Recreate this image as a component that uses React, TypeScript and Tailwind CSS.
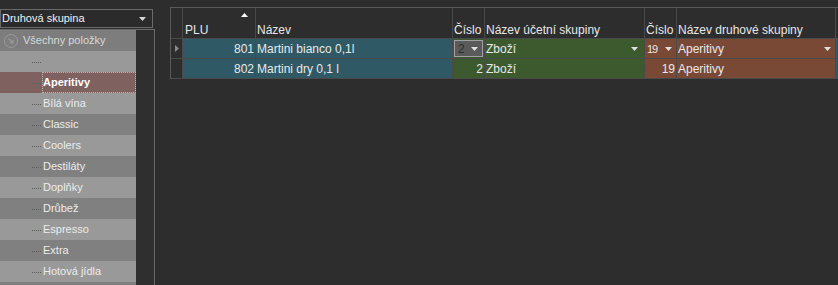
import React from "react";

const font = { fontFamily: '"Liberation Sans", Arial, sans-serif' };

const treeItems = [
  "Bílá vína",
  "Classic",
  "Coolers",
  "Destiláty",
  "Doplňky",
  "Drůbež",
  "Espresso",
  "Extra",
  "Hotová jídla",
  "",
];

const Caret: React.FC<{ className?: string }> = ({ className }) => (
  <svg width="7" height="4" viewBox="0 0 7 4" className={className}>
    <path d="M0 0h7L3.5 4z" fill="currentColor" />
  </svg>
);

const TreeRow: React.FC<{ label: string; dark: boolean }> = ({ label, dark }) => (
  <div className={`relative h-[21px] flex items-center ${dark ? "bg-[#808080]" : "bg-[#999999]"}`}>
    <div className="absolute left-[32px] top-1/2 w-[9px] border-t border-dotted border-[#5c5c5c]" />
    <span className="ml-[43px] text-[11px] text-[#ececec]">{label}</span>
  </div>
);

const cellLine = "border-r border-b border-[#4a4a4a]";
const headCell = `h-[31px] ${cellLine} flex items-end pl-[1px] leading-[16px]`;

export default function App() {
  return (
    <div className="w-[838px] h-[285px] bg-[#2d2d2d] flex overflow-hidden" style={font}>
      {/* left panel */}
      <div className="w-[155px] shrink-0 flex flex-col">
        <div className="mt-[9px] h-[19px] w-[153px] border border-[#6a6a6a] bg-[#2b2b2b] flex items-center justify-between pl-[1px] pr-[6px]">
          <span className="text-[11px] text-[#f0f0f0] leading-none">Druhová skupina</span>
          <Caret className="text-[#d8d8d8]" />
        </div>
        <div className="mt-[1px] flex-1 border-t border-r border-[#6a6a6a] flex overflow-hidden">
          <div className="w-[136px] relative">
            <div className="absolute left-[32px] top-[42px] bottom-0 border-l border-dotted border-[#5c5c5c]" />
            <div className="h-[21px] bg-[#7d7d7d] flex items-center">
              <span className="ml-[4px] w-[14px] h-[14px] rounded-full border border-[#9a9a9a] flex items-center justify-center">
                <svg width="8" height="8" viewBox="0 0 8 8">
                  <path d="M1.5 1.5L6 6M6 2.5V6H2.5" stroke="#9a9a9a" strokeWidth="1.2" fill="none" />
                </svg>
              </span>
              <span className="ml-[5px] text-[11px] text-[#d9d9d9]">Všechny položky</span>
            </div>
            <div className="relative h-[21px] bg-[#999999]">
              <div className="absolute left-[32px] top-[11px] w-[9px] border-t border-dotted border-[#5c5c5c]" />
            </div>
            <div className="relative h-[21px] bg-[#7f615f] flex items-center">
              <div className="absolute left-[32px] top-1/2 w-[9px] border-t border-dotted border-[#5c5c5c]" />
              <div className="absolute left-[42px] right-0 top-0 bottom-0 border border-dotted border-[#b8b8b8]" />
              <span className="ml-[43px] text-[11px] font-bold text-white">Aperitivy</span>
            </div>
            {treeItems.map((t, i) => (
              <TreeRow key={i} label={t} dark={i % 2 === 1} />
            ))}
          </div>
          <div className="flex-1 bg-[#2f2f2f]" />
        </div>
      </div>

      {/* splitter */}
      <div className="w-[15px] shrink-0" />

      {/* grid */}
      <div className="flex-1 mt-[7px] border-t border-l border-[#5a5a5a] self-start">
        <div className="grid grid-cols-[12px_73px_197px_32px_160px_32px_159px_1fr] text-[12px] text-[#e8e8e8]">
          {/* header */}
          <div className={`h-[31px] ${cellLine}`} />
          <div className={`${headCell} relative pl-[2px]`}>
            <span>PLU</span>
            <Caret className="absolute right-[7px] top-[5px] rotate-180 text-white" />
          </div>
          <div className={headCell}>Název</div>
          <div className={headCell}>Číslo</div>
          <div className={headCell}>Název účetní skupiny</div>
          <div className={headCell}>Číslo</div>
          <div className={headCell}>Název druhové skupiny</div>
          <div className="h-[31px] border-b border-[#4a4a4a]" />

          {/* row 1 */}
          <div className={`h-[20px] ${cellLine} flex items-center justify-center`}>
            <svg width="4" height="7" viewBox="0 0 4 7">
              <path d="M0 0v7l4-3.5z" fill="#8a8a8a" />
            </svg>
          </div>
          <div className={`h-[20px] ${cellLine} bg-[#2f5965] flex items-center justify-end pr-[1px] pt-[1px]`}>801</div>
          <div className={`h-[20px] ${cellLine} bg-[#2f5965] flex items-center pl-[1px] pt-[1px]`}>Martini bianco 0,1l</div>
          <div className={`h-[20px] ${cellLine} bg-[#3d5a2f] p-[1px]`}>
            <div className="h-full border border-[#a0a0a0] bg-[#5a5a5a] flex items-center justify-between pl-[3px] pr-[4px]">
              <span className="text-[#2c2c2c]">2</span>
              <Caret className="text-[#e0e0e0]" />
            </div>
          </div>
          <div className={`h-[20px] ${cellLine} bg-[#3d5a2f] flex items-center justify-between pl-[1px] pr-[6px] pt-[1px]`}>
            <span>Zboží</span>
            <Caret className="text-[#e0e0e0]" />
          </div>
          <div className={`h-[20px] ${cellLine} bg-[#7a4935] flex items-center justify-between pl-[2px] pr-[4px] pt-[1px]`}>
            <span className="text-[11px] tracking-[-1px]">19</span>
            <Caret className="text-[#e0e0e0]" />
          </div>
          <div className={`h-[20px] ${cellLine} bg-[#7a4935] flex items-center justify-between pl-[1px] pr-[4px] pt-[1px]`}>
            <span>Aperitivy</span>
            <Caret className="text-[#e0e0e0]" />
          </div>
          <div className="h-[20px] border-b border-[#4a4a4a] bg-[#2f5965]" />

          {/* row 2 */}
          <div className={`h-[20px] ${cellLine}`} />
          <div className={`h-[20px] ${cellLine} bg-[#2f5965] flex items-center justify-end pr-[1px] pt-[1px]`}>802</div>
          <div className={`h-[20px] ${cellLine} bg-[#2f5965] flex items-center pl-[1px] pt-[1px]`}>Martini dry 0,1 l</div>
          <div className={`h-[20px] ${cellLine} bg-[#3d5a2f] flex items-center justify-end pr-[1px] pt-[1px]`}>2</div>
          <div className={`h-[20px] ${cellLine} bg-[#3d5a2f] flex items-center pl-[1px] pt-[1px]`}>Zboží</div>
          <div className={`h-[20px] ${cellLine} bg-[#7a4935] flex items-center justify-end pr-[1px] pt-[1px]`}>19</div>
          <div className={`h-[20px] ${cellLine} bg-[#7a4935] flex items-center pl-[1px] pt-[1px]`}>Aperitivy</div>
          <div className="h-[20px] border-b border-[#4a4a4a] bg-[#2f5965]" />
        </div>
      </div>
    </div>
  );
}
